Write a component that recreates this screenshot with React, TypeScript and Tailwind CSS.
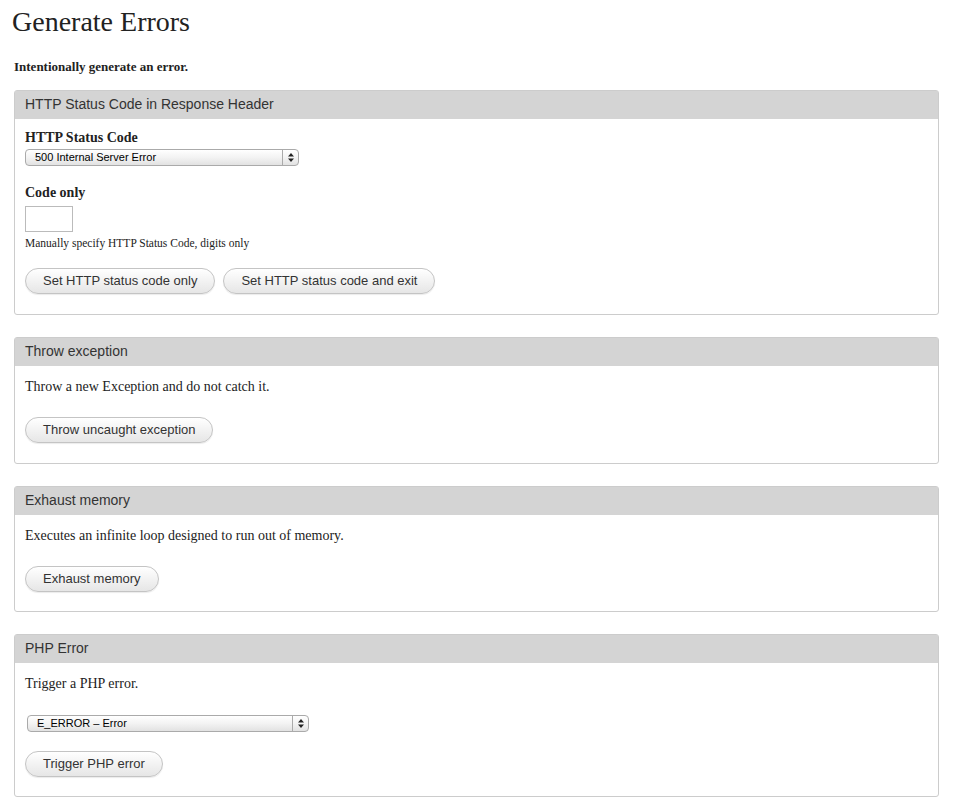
const sans = "font-[family-name:Liberation_Sans,Arial,sans-serif]";
const serif = "font-[family-name:Liberation_Serif,Times_New_Roman,serif]";

function Btn({ children }: { children: React.ReactNode }) {
  return (
    <button
      className={`${sans} h-[26px] rounded-full border border-[#c4c4c4] bg-gradient-to-b from-white to-[#e6e6e6] px-[17px] text-[13px] text-[#333] shadow-[0_1px_1px_rgba(0,0,0,0.08)]`}
    >
      {children}
    </button>
  );
}

function Select({ label, width }: { label: string; width: string }) {
  return (
    <div
      className={`${sans} flex h-[17px] items-center justify-between rounded-[4px] border border-[#aaa] bg-gradient-to-b from-white via-[#f3f3f3] to-[#e2e2e2] pl-[9px] text-[11px] text-black ${width}`}
    >
      <span>{label}</span>
      <span className="flex h-full w-[16px] items-center justify-center border-l border-[#aaa]">
        <svg width="6" height="9" viewBox="0 0 6 9">
          <path d="M3 0L6 3.5H0Z M3 9L0 5.5H6Z" fill="#222" />
        </svg>
      </span>
    </div>
  );
}

function Fieldset({ title, children, h }: { title: string; children: React.ReactNode; h: string }) {
  return (
    <div className={`rounded-[3px] border border-[#ccc] ${h}`}>
      <div className={`${sans} flex h-[28px] items-center bg-[#d4d4d4] px-[10px] text-[14px] text-[#333]`}>
        {title}
      </div>
      <div className="px-[10px]">{children}</div>
    </div>
  );
}

export default function App() {
  return (
    <div className={`${serif} min-h-[806px] bg-white px-[14px] text-[#222]`}>
      <h1 className="-ml-[2px] pt-[4px] text-[28px] leading-[36px]">Generate Errors</h1>
      <p className="mt-[17px] text-[13px] font-bold">Intentionally generate an error.</p>
      <div className="mt-[13px] flex flex-col gap-[22px]">
        <Fieldset title="HTTP Status Code in Response Header" h="h-[225px]">
          <div className="mt-[8px] text-[14px] font-bold">HTTP Status Code</div>
          <div className="mt-[1px]"><Select label="500 Internal Server Error" width="w-[274px]" /></div>
          <div className="mt-[16px] text-[14px] font-bold">Code only</div>
          <div className="mt-[3px] h-[26px] w-[48px] border border-[#bbb]" />
          <div className="mt-[3px] text-[11.5px]">Manually specify HTTP Status Code, digits only</div>
          <div className="mt-[16px] flex gap-[8px]">
            <Btn>Set HTTP status code only</Btn>
            <Btn>Set HTTP status code and exit</Btn>
          </div>
        </Fieldset>
        <Fieldset title="Throw exception" h="h-[127px]">
          <div className="mt-[10px] text-[14px]">Throw a new Exception and do not catch it.</div>
          <div className="mt-[20px]"><Btn>Throw uncaught exception</Btn></div>
        </Fieldset>
        <Fieldset title="Exhaust memory" h="h-[126px]">
          <div className="mt-[10px] text-[14px]">Executes an infinite loop designed to run out of memory.</div>
          <div className="mt-[20px]"><Btn>Exhaust memory</Btn></div>
        </Fieldset>
        <Fieldset title="PHP Error" h="h-[163px]">
          <div className="mt-[10px] text-[14px]">Trigger a PHP error.</div>
          <div className="mt-[21px] pl-[2px]"><Select label="E_ERROR – Error" width="w-[282px]" /></div>
          <div className="mt-[19px]"><Btn>Trigger PHP error</Btn></div>
        </Fieldset>
      </div>
    </div>
  );
}
